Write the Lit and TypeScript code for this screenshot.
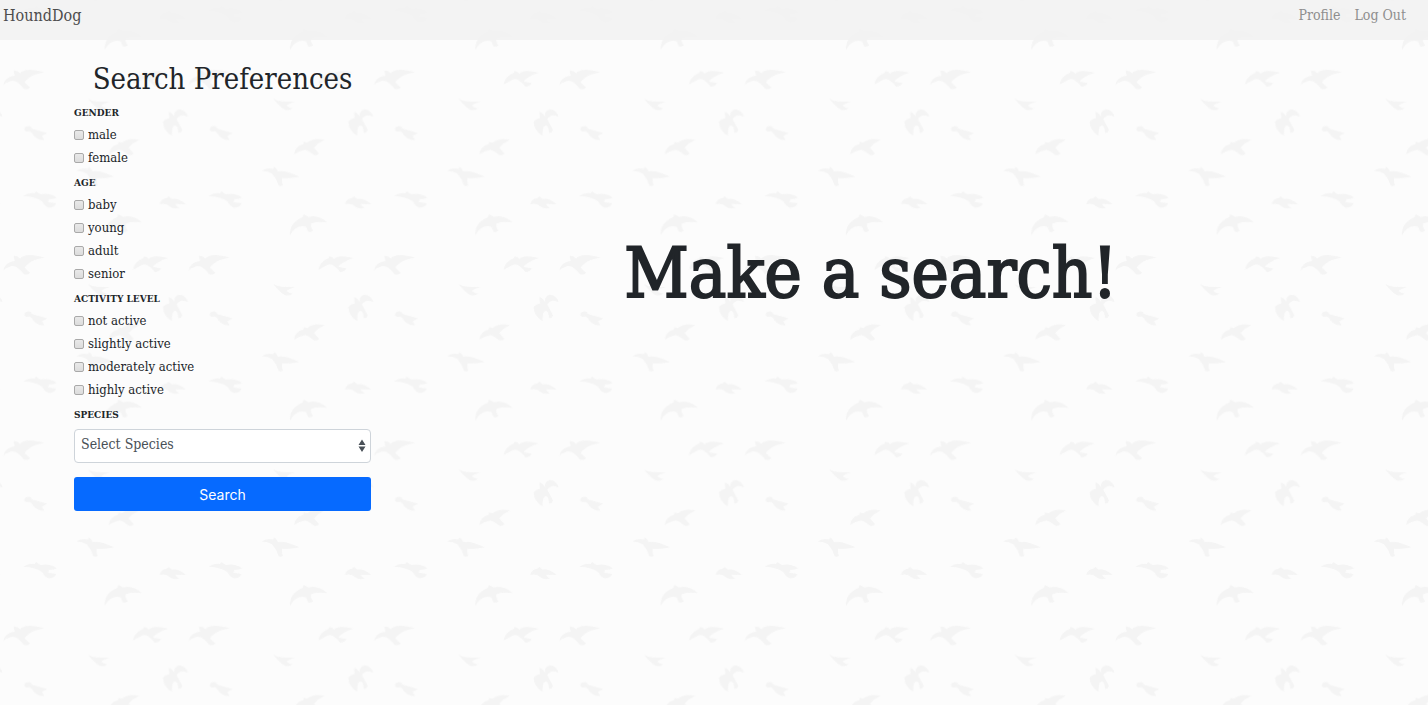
import { LitElement, html, css, unsafeCSS } from "lit";
import { customElement, state } from "lit/decorators.js";

// One flock of ten birds; the tile repeats three times across and down in 556px.
const FLOCK = `
<svg xmlns="http://www.w3.org/2000/svg" width="556" height="556" viewBox="0 0 556 556">
<defs>
<g id="f" fill="#f4f4f4" transform="translate(99.33 50.67) scale(.33333)">
<path d="M101 102Q104 77 132 66L134 61Q144 62 148 69Q160 54 207 66Q190 70 176 80Q165 86 161 93L185 97Q181 108 166 108Q160 98 148 90Q136 80 122 90Q110 96 101 102Z"/>
<path d="M268 104Q272 78 302 75L299 60Q310 58 318 68Q334 48 392 65Q360 70 345 82Q334 90 332 95L348 110Q342 118 330 115Q324 108 316 100Q300 84 284 94Q272 96 268 104Z"/>
<path d="M218 255Q192 242 191 213Q198 204 210 202Q208 190 209 183Q220 188 226 198Q222 180 240 176Q258 176 266 198Q244 188 232 205L249 238Q246 248 237 246Q236 226 228 225Q216 226 218 255Z"/>
<path d="M331 238Q330 226 345 226Q354 228 352 233Q364 238 400 247L384 256L391 268Q372 270 358 254Q352 242 345 241Q338 246 331 238Z"/>
<path d="M28 311Q32 286 56 281L57 273L68 276Q86 260 120 267Q100 276 88 291L103 308Q98 316 88 313Q76 302 62 297Q44 300 28 311Z"/>
<path d="M487 361Q500 350 522 355L524 348Q534 354 536 362Q560 358 600 378Q566 384 549 382Q546 392 551 404Q546 408 538 405Q532 384 518 369Q506 362 487 361Z"/>
<path d="M181 461Q184 444 202 442L208 437Q214 442 218 445Q236 440 260 461Q240 460 228 460Q232 468 240 472Q222 476 212 468Q200 456 181 461Z"/>
<path d="M328 436Q346 424 362 428L366 422Q374 428 380 431Q408 426 428 441Q418 446 406 445L402 454L426 458Q422 472 404 471Q392 468 384 452Q366 438 328 436Z"/>
<path d="M16 554Q14 516 54 500L57 491Q66 496 72 499Q98 490 128 515Q98 512 80 518Q76 526 85 540Q78 546 70 542L64 528Q34 520 16 554Z"/>
<path d="M522 144Q534 152 548 152Q566 152 588 154Q570 158 562 164Q566 171 580 172Q570 182 556 177Q538 166 522 144Z"/>
</g>
<pattern id="p" width="185.3333" height="185.3333" patternUnits="userSpaceOnUse">
<use href="#f"/><use href="#f" x="-185.3333"/><use href="#f" y="-185.3333"/><use href="#f" x="-185.3333" y="-185.3333"/>
</pattern>
</defs>
<rect width="556" height="556" fill="url(#p)"/>
</svg>`;

const ARROWS = `<svg xmlns="http://www.w3.org/2000/svg" width="8" height="14" viewBox="0 0 8 14"><path fill="#495057" d="M4 .5L7.5 6H.5ZM4 13L.5 7.5H7.5Z"/></svg>`;

const svgUrl = (svg: string) =>
  unsafeCSS(`url("data:image/svg+xml,${encodeURIComponent(svg.trim())}")`);

interface Group {
  name: string;
  options: string[];
}

const GROUPS: Group[] = [
  { name: "GENDER", options: ["male", "female"] },
  { name: "AGE", options: ["baby", "young", "adult", "senior"] },
  {
    name: "ACTIVITY LEVEL",
    options: ["not active", "slightly active", "moderately active", "highly active"],
  },
];

@customElement("search-preferences")
export class SearchPreferences extends LitElement {
  @state() private selected = new Set<string>();

  static styles = css`
    :host {
      display: block;
    }
    .title {
      margin: 0 0 3px;
      font-size: 29px;
      line-height: 35px;
      font-weight: 400;
      text-align: center;
      white-space: nowrap;
    }
    .group {
      margin: 0 0 1px;
      padding: 0;
      border: 0;
      min-width: 0;
    }
    .heading {
      display: block;
      padding: 3px 0 0;
      font-size: 10px;
      line-height: 20px;
      font-weight: 700;
    }
    .option {
      display: flex;
      align-items: center;
      gap: 4px;
      font-size: 13px;
      line-height: 23px;
    }
    .box {
      appearance: none;
      box-sizing: border-box;
      width: 10px;
      height: 10px;
      margin: 0;
      border: 1px solid #a9a9a9;
      border-radius: 2px;
      background: linear-gradient(#e9e9e9, #dcdcdc);
    }
    .box:checked {
      background: #066aff;
    }
    .species {
      appearance: none;
      display: block;
      box-sizing: border-box;
      width: 100%;
      height: 34px;
      margin: 4px 0 14px;
      padding: 0 24px 4px 6px;
      border: 1px solid #ced4da;
      border-radius: 4px;
      background: #fff ${svgUrl(ARROWS)} no-repeat right 4px center;
      color: #495057;
      font: inherit;
      font-size: 14px;
    }
    .submit {
      display: block;
      width: 100%;
      height: 34px;
      padding: 0;
      border: 0;
      border-radius: 3px;
      background: #066aff;
      color: #fff;
      font-family: Inter, Roboto, sans-serif;
      font-size: 14px;
    }
  `;

  private toggle(option: string) {
    const next = new Set(this.selected);
    next.has(option) ? next.delete(option) : next.add(option);
    this.selected = next;
  }

  render() {
    return html`
      <form @submit=${(e: Event) => e.preventDefault()}>
        <h2 class="title">Search Preferences</h2>
        ${GROUPS.map(
          (group) => html`
            <fieldset class="group">
              <legend class="heading">${group.name}</legend>
              ${group.options.map(
                (option) => html`
                  <label class="option">
                    <input
                      class="box"
                      type="checkbox"
                      .checked=${this.selected.has(option)}
                      @change=${() => this.toggle(option)}
                    />
                    ${option}
                  </label>
                `
              )}
            </fieldset>
          `
        )}
        <label class="heading" for="species">SPECIES</label>
        <select class="species" id="species">
          <option>Select Species</option>
        </select>
        <button class="submit" type="submit">Search</button>
      </form>
    `;
  }
}

@customElement("app-root")
export class AppRoot extends LitElement {
  static styles = css`
    :host {
      display: block;
      box-sizing: border-box;
      min-height: 100vh;
      background: #fcfcfc ${svgUrl(FLOCK)};
      color: #212529;
      font-family: "DejaVu Serif Condensed", "DejaVu Serif", serif;
    }
    .bar {
      display: flex;
      justify-content: space-between;
      box-sizing: border-box;
      height: 40px;
      padding: 4px 22px 0 3px;
      background: rgba(241, 241, 241, 0.85);
    }
    .brand {
      color: #4d4d4d;
      font-size: 16px;
      line-height: 24px;
      text-decoration: none;
    }
    .nav {
      display: flex;
      gap: 14px;
    }
    .link {
      color: #8e8e8e;
      font-size: 14px;
      line-height: 22px;
      text-decoration: none;
    }
    .page {
      display: grid;
      grid-template-columns: 297px 1fr;
      gap: 17px;
      padding: 22px 74px;
    }
    .prompt {
      margin: 169px 0 0;
      font-size: 70px;
      line-height: 84px;
      font-weight: 400;
      text-align: center;
      -webkit-text-stroke: 2px #212529;
    }
  `;

  render() {
    return html`
      <header class="bar">
        <a class="brand" href="#">HoundDog</a>
        <nav class="nav">
          <a class="link" href="#profile">Profile</a>
          <a class="link" href="#logout">Log Out</a>
        </nav>
      </header>
      <div class="page">
        <search-preferences></search-preferences>
        <main>
          <h1 class="prompt">Make a search!</h1>
        </main>
      </div>
    `;
  }
}
